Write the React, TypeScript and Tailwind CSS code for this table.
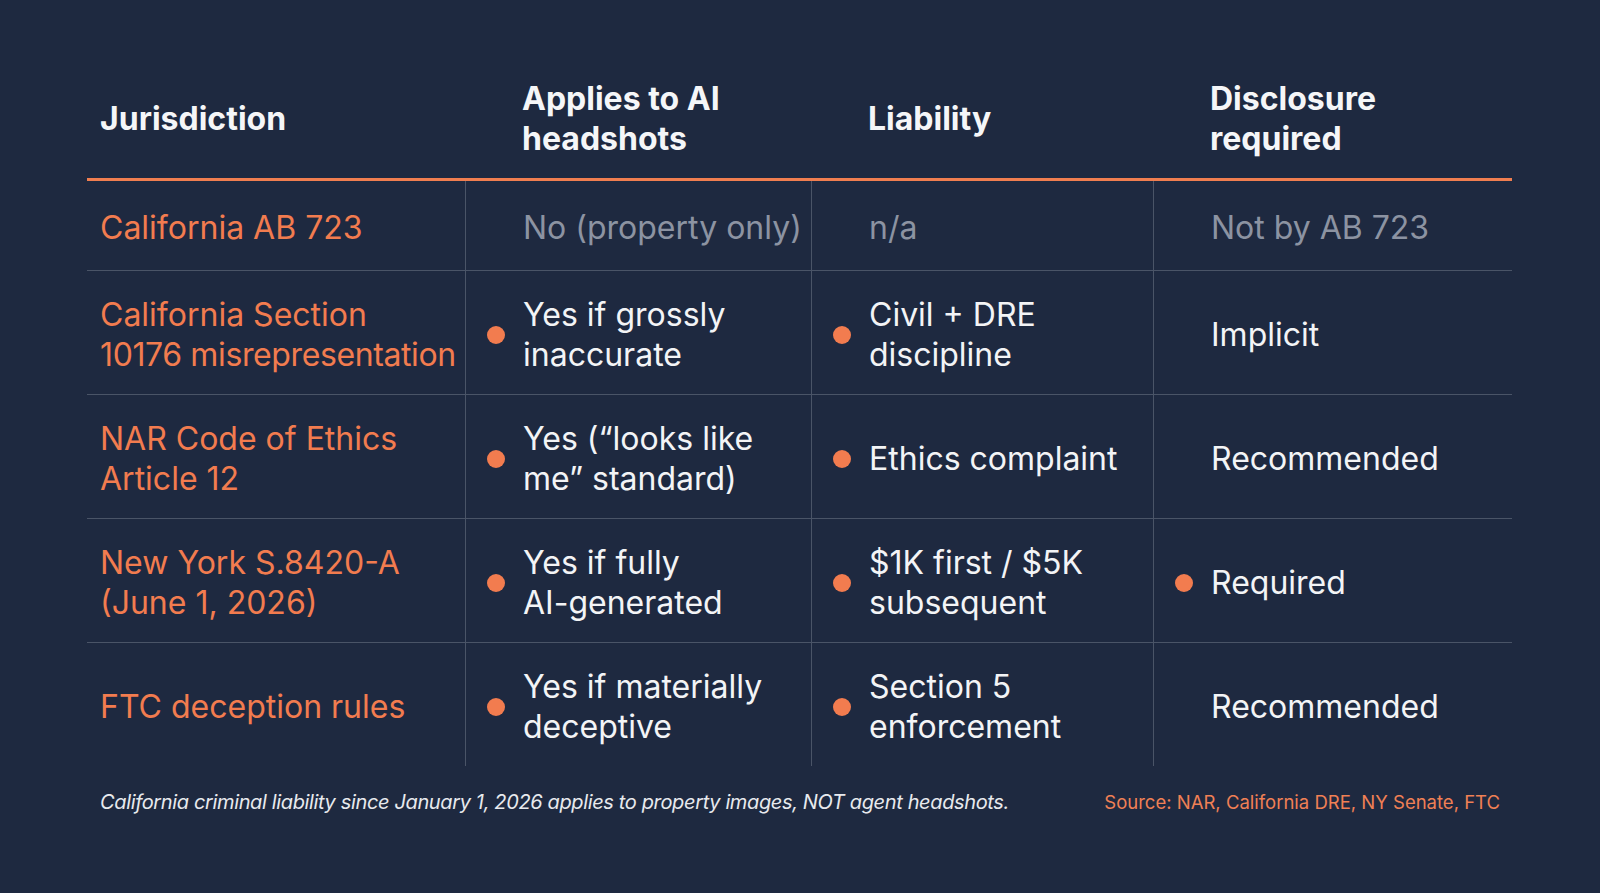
const rows = [
  {
    name: ["California AB 723"],
    cells: [
      { text: ["No (property only)"], dot: false, muted: true },
      { text: ["n/a"], dot: false, muted: true },
      { text: ["Not by AB 723"], dot: false, muted: true },
    ],
    first: true,
  },
  {
    name: ["California Section", "10176 misrepresentation"],
    cells: [
      { text: ["Yes if grossly", "inaccurate"], dot: true },
      { text: ["Civil + DRE", "discipline"], dot: true },
      { text: ["Implicit"], dot: false },
    ],
  },
  {
    name: ["NAR Code of Ethics", "Article 12"],
    cells: [
      { text: ["Yes (\u201clooks like", "me\u201d standard)"], dot: true },
      { text: ["Ethics complaint"], dot: true },
      { text: ["Recommended"], dot: false },
    ],
  },
  {
    name: ["New York S.8420-A", "(June 1, 2026)"],
    cells: [
      { text: ["Yes if fully", "AI-generated"], dot: true },
      { text: ["$1K first / $5K", "subsequent"], dot: true },
      { text: ["Required"], dot: true },
    ],
  },
  {
    name: ["FTC deception rules"],
    cells: [
      { text: ["Yes if materially", "deceptive"], dot: true },
      { text: ["Section 5", "enforcement"], dot: true },
      { text: ["Recommended"], dot: false },
    ],
  },
]

type Cell = { text: string[]; dot: boolean; muted?: boolean }

function ValueCell({ cell }: { cell: Cell }) {
  return (
    <div className="flex items-center border-l border-[#4a5467] pl-[21px] pr-2 pt-[4px]">
      <span
        className={
          cell.dot
            ? "h-[18px] w-[18px] shrink-0 rounded-full bg-[#f27c4f]"
            : "h-[18px] w-[18px] shrink-0"
        }
      />
      <div className={"ml-[18px] " + (cell.muted ? "text-[#8c93a2]" : "text-[#f3f4f6]")}>
        {cell.text.map((t) => (
          <div key={t}>{t}</div>
        ))}
      </div>
    </div>
  )
}

export default function App() {
  return (
    <div
      className="h-[893px] w-full bg-[#1e2940] pl-[87px] pr-[88px] pt-[58px]"
      style={{ fontFamily: "Inter, 'Noto Sans', sans-serif" }}
    >
      <div className="grid grid-cols-[378px_346px_342px_1fr] border-b-[3px] border-[#f07e50] h-[123px] text-[32px] font-bold leading-[40px] text-[#f5f6f8]">
        <div className="flex items-center pl-[13px] pt-[2px]">Jurisdiction</div>
        <div className="flex items-center pl-[57px] pt-[2px]">
          <div>
            <div>Applies to AI</div>
            <div>headshots</div>
          </div>
        </div>
        <div className="flex items-center pl-[57px] pt-[2px]">Liability</div>
        <div className="flex items-center pl-[57px] pt-[2px]">
          <div>
            <div>Disclosure</div>
            <div>required</div>
          </div>
        </div>
      </div>

      <div className="text-[32px] leading-[40px]">
        {rows.map((row, i) => (
          <div
            key={i}
            className={
              "grid grid-cols-[378px_346px_342px_1fr] " +
              (row.first ? "h-[89px]" : "h-[124px] border-t border-[#4a5467]")
            }
          >
            <div className="flex items-center pl-[13px] pt-[4px] text-[#f27c4f]">
              <div>
                {row.name.map((n) => (
                  <div
                    key={n}
                    className={
                      n.length > 20
                        ? "whitespace-nowrap tracking-[-0.012em]"
                        : "whitespace-nowrap"
                    }
                  >
                    {n}
                  </div>
                ))}
              </div>
            </div>
            {row.cells.map((c, j) => (
              <ValueCell key={j} cell={c} />
            ))}
          </div>
        ))}
      </div>

      <div className="mt-[22px] flex items-center justify-between pl-[13px] pr-[12px] leading-[28px]">
        <p className="text-[20px] italic tracking-[-0.018em] text-[#e8eaee]">
          California criminal liability since January 1, 2026 applies to property images, NOT agent headshots.
        </p>
        <p className="text-[18.5px] text-[#f08055]">Source: NAR, California DRE, NY Senate, FTC</p>
      </div>
    </div>
  )
}
